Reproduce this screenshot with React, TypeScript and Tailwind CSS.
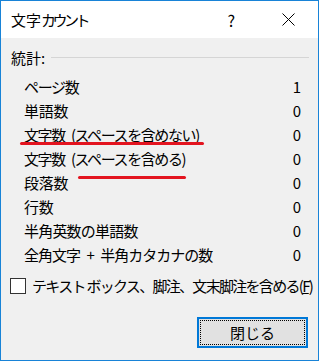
import React from "react";

const rows: { label: string; value: string; cls: string; mark?: "a" | "b" }[] = [
  { label: "ページ数", value: "1", cls: "tracking-[-1.3px]" },
  { label: "単語数", value: "0", cls: "tracking-[-0.3px]" },
  { label: "文字数\u2002(スペースを含めない)", value: "0", cls: "tracking-[-1.4px]", mark: "a" },
  { label: "文字数\u2002(スペースを含める)", value: "0", cls: "tracking-[-1.4px]", mark: "b" },
  { label: "段落数", value: "0", cls: "tracking-[-0.3px]" },
  { label: "行数", value: "0", cls: "tracking-[-0.3px]" },
  { label: "半角英数の単語数", value: "0", cls: "tracking-[-0.8px]" },
  { label: "全角文字\u2002+\u2002半角カタカナの数", value: "0", cls: "tracking-[-1px]" },
];

export default function App() {
  return (
    <div
      className="w-[319px] h-[361px] flex flex-col border border-[#1883d7] bg-[#f0f0f0] text-black text-[15px] leading-[20px] overflow-hidden"
      style={{ fontFamily: '"Noto Sans CJK JP", "Noto Sans", sans-serif' }}
    >
      {/* title bar */}
      <div className="h-[37px] shrink-0 bg-white flex items-center pl-[10px]">
        <span className="whitespace-nowrap">
          文字<span className="tracking-[-3.5px]">カウント</span>
        </span>
        <span className="ml-auto mr-[47px] text-[16px]">?</span>
        <svg width="13" height="13" viewBox="0 0 13 13" className="mr-[23px]">
          <path d="M0.5 0.5 L12.5 12.5 M12.5 0.5 L0.5 12.5" stroke="#000" strokeWidth="1" fill="none" />
        </svg>
      </div>

      <div className="flex-1 flex flex-col pt-[8px]">
        {/* group header */}
        <div className="h-[24px] flex items-center pl-[10px] pr-[9px] gap-[6px]">
          <span>統計:</span>
          <div className="flex-1 h-px bg-[#d5d5d5] mt-[-2px]" />
        </div>

        <div className="mt-[5px] flex flex-col">
          {rows.map((r) => (
            <div key={r.label} className="relative h-[24px] flex items-center pl-[23px] pr-[17px]">
              <span className={`whitespace-nowrap ${r.cls}`}>{r.label}</span>
              <span className="ml-auto">{r.value}</span>
              {r.mark === "a" && (
                <div className="absolute left-[19px] top-[19px] w-[184px] h-[3px] rounded-full bg-[#e3141f]" />
              )}
              {r.mark === "b" && (
                <div className="absolute left-[77px] top-[29px] w-[108px] h-[3px] rounded-full bg-[#e3141f]" />
              )}
            </div>
          ))}
        </div>

        {/* checkbox */}
        <div className="mt-[9px] h-[20px] flex items-center pl-[9px] gap-[6px]">
          <div className="w-[16px] h-[16px] shrink-0 border border-[#333] bg-white" />
          <span className="whitespace-nowrap tracking-[-1.7px]">
            テキスト ボックス、脚注、文末脚注を含める(<span className="underline">F</span>)
          </span>
        </div>

        {/* button */}
        <div className="mt-[21px] flex justify-end pr-[10px]">
          <button className="w-[111px] h-[31px] border-2 border-[#0078d7] bg-[#e1e1e1] p-[1px]">
            <div className="w-full h-full border border-dotted border-black flex items-center justify-center">
              閉じる
            </div>
          </button>
        </div>
      </div>
    </div>
  );
}
